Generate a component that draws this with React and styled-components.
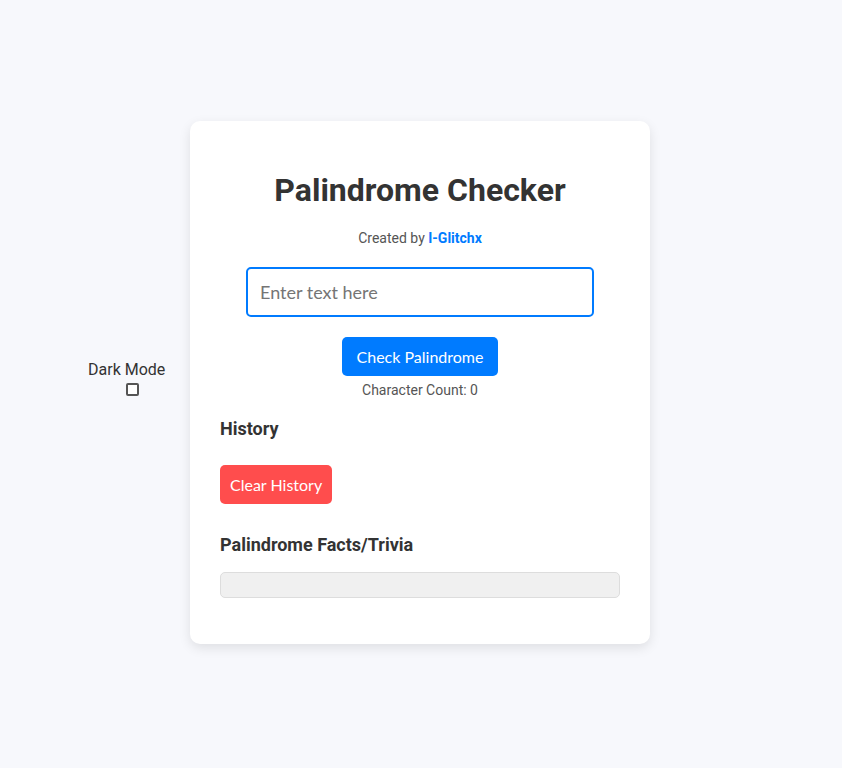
import React from "react";
import styled, { createGlobalStyle } from "styled-components";

const Global = createGlobalStyle`
  html, body { margin: 0; padding: 0; }
  body {
    background: #f7f8fc;
    font-family: Roboto, "Liberation Sans", sans-serif;
    color: #333;
  }
`;

const Page = styled.div`
  position: relative;
  min-height: 100vh;
  display: flex;
  align-items: center;
  justify-content: center;
`;

const DarkToggle = styled.label`
  position: absolute;
  left: 88px;
  top: 360px;
  display: flex;
  flex-direction: column;
  align-items: center;
  font-size: 16px;
  color: #333;
  gap: 4px;
`;

const Check = styled.input`
  appearance: none;
  margin: 0 0 0 12px;
  width: 13px;
  height: 13px;
  box-sizing: border-box;
  border: 2px solid #555;
  border-radius: 2px;
  background: #fff;
`;

const Card = styled.div`
  width: 400px;
  padding: 30px;
  margin: 0 2px 4px 0;
  background: #fff;
  border-radius: 10px;
  box-shadow: 0 4px 12px rgba(0, 0, 0, 0.1);
  display: flex;
  flex-direction: column;
  align-items: center;
`;

const Title = styled.h1`
  margin: 20px 0 0;
  font-size: 32px;
  font-weight: 700;
  color: #333;
  line-height: 38px;
`;

const Credit = styled.p`
  margin: 21px 0 0;
  font-size: 14px;
  color: #555;
  line-height: 16px;
`;

const Author = styled.a`
  color: #007bff;
  font-weight: 700;
  text-decoration: none;
`;

const TextInput = styled.input`
  box-sizing: border-box;
  margin-top: 21px;
  width: 348px;
  height: 50px;
  padding: 0 12px;
  border: 2px solid #007bff;
  border-radius: 5px;
  font-family: Lato, sans-serif;
  font-size: 18px;
  color: #333;
  outline: none;
  &::placeholder { color: #757575; }
`;

const Button = styled.button`
  margin-top: ${p => p.$mt}px;
  align-self: ${p => (p.$left ? "flex-start" : "center")};
  height: 39px;
  padding: 0 ${p => p.$px}px;
  border: none;
  border-radius: 5px;
  background: ${p => p.$bg};
  color: #fff;
  font-family: Lato, sans-serif;
  font-size: 16px;
  cursor: pointer;
`;

const Count = styled.p`
  margin: 6px 0 0;
  font-size: 14px;
  color: #555;
  line-height: 16px;
`;

const SectionTitle = styled.h3`
  align-self: flex-start;
  margin: ${p => p.$mt}px 0 0;
  font-size: 18px;
  font-weight: 700;
  color: #333;
  line-height: 22px;
`;

const Trivia = styled.div`
  align-self: stretch;
  margin: 16px 0 16px;
  height: 24px;
  background: #f0f0f0;
  border: 1px solid #ddd;
  border-radius: 5px;
`;

export default function App() {
  return (
    <>
      <Global />
      <Page>
        <DarkToggle>
          Dark Mode
          <Check type="checkbox" />
        </DarkToggle>
        <Card>
          <Title>Palindrome Checker</Title>
          <Credit>
            Created by <Author href="#">I-Glitchx</Author>
          </Credit>
          <TextInput placeholder="Enter text here" />
          <Button $mt={20} $px={15} $bg="#007bff">Check Palindrome</Button>
          <Count>Character Count: 0</Count>
          <SectionTitle $mt={20}>History</SectionTitle>
          <Button $mt={25} $px={10} $left $bg="#ff4d4d">Clear History</Button>
          <SectionTitle $mt={30}>Palindrome Facts/Trivia</SectionTitle>
          <Trivia />
        </Card>
      </Page>
    </>
  );
}
